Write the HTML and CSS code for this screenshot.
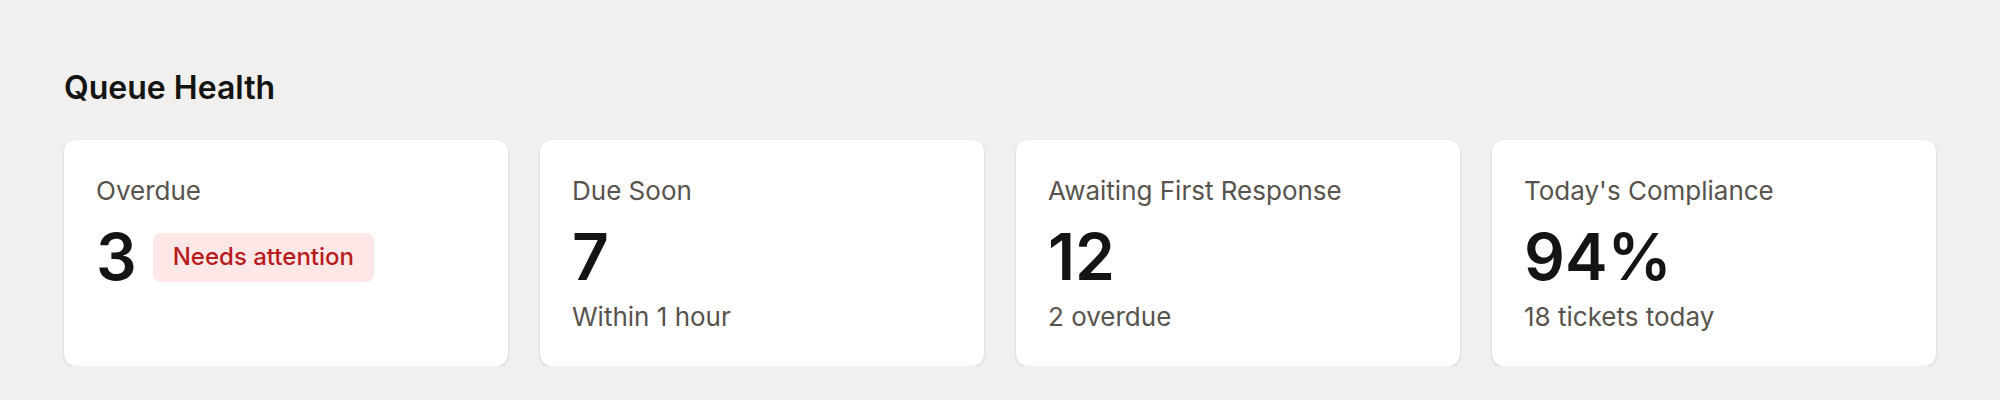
FILE: index.html
```html
<!DOCTYPE html>
<html lang="en">
<head>
<meta charset="utf-8">
<title>Queue Health</title>
<link rel="stylesheet" href="styles.css">
</head>
<body>
<section class="queue">
  <h2 class="queue-title">Queue Health</h2>
  <div class="cards">
    <div class="card">
      <div class="card-label">Overdue</div>
      <div class="card-row">
        <div class="card-value">3</div>
        <span class="badge">Needs attention</span>
      </div>
    </div>
    <div class="card">
      <div class="card-label">Due Soon</div>
      <div class="card-row">
        <div class="card-value">7</div>
      </div>
      <div class="card-sub">Within 1 hour</div>
    </div>
    <div class="card">
      <div class="card-label">Awaiting First Response</div>
      <div class="card-row">
        <div class="card-value">12</div>
      </div>
      <div class="card-sub">2 overdue</div>
    </div>
    <div class="card">
      <div class="card-label">Today's Compliance</div>
      <div class="card-row">
        <div class="card-value">94%</div>
      </div>
      <div class="card-sub">18 tickets today</div>
    </div>
  </div>
</section>
</body>
</html>
```
FILE: styles.css
```css
* { box-sizing: border-box; }
html, body {
  margin: 0;
  padding: 0;
  background: #f1f0ee;
}
body {
  font-family: Inter, "Noto Sans", "Liberation Sans", sans-serif;
  color: #141413;
}
.queue {
  padding: 64px 64px 0 64px;
}
.queue-title {
  margin: 0 0 28px 0;
  font-size: 32px;
  line-height: 48px;
  font-weight: 600;
  color: #141413;
}
.cards {
  display: grid;
  grid-template-columns: repeat(4, 1fr);
  gap: 32px;
}
.card {
  background: #ffffff;
  border-radius: 12px;
  padding: 33px 32px 29px 32px;
  box-shadow: 0 1px 3px rgba(0, 0, 0, 0.12), 0 1px 2px rgba(0, 0, 0, 0.04);
  min-height: 226px;
}
.card-label {
  font-size: 26px;
  line-height: 1.4;
  color: #57534e;
}
.card-row {
  display: flex;
  align-items: center;
  gap: 16px;
  margin-top: 16px;
}
.card-value {
  font-size: 64px;
  line-height: 1;
  font-weight: 600;
  color: #141413;
}
.badge {
  display: inline-block;
  background: #fde7e7;
  color: #b91c1c;
  font-size: 24px;
  line-height: 36px;
  font-weight: 500;
  padding: 6px 20px 7px 20px;
  border-radius: 8px;
}
.card-sub {
  margin-top: 10px;
  font-size: 26px;
  line-height: 1.4;
  color: #57534e;
}
```
